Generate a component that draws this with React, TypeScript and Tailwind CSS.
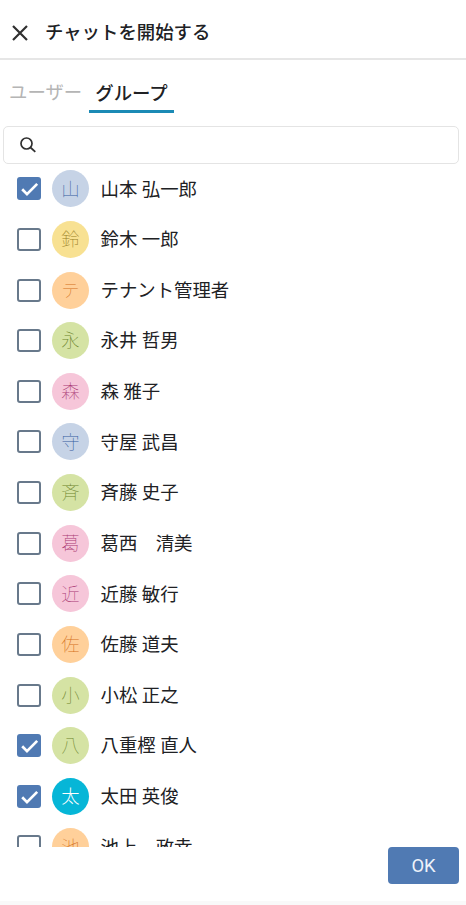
import { useState } from "react";
import clsx from "clsx";

const tones = {
  blue: "bg-[#c6d3e6] text-[#365d9e]",
  yellow: "bg-[#f8e192] text-[#988024]",
  orange: "bg-[#ffd09a] text-[#d5701c]",
  green: "bg-[#d5e3a4] text-[#6d842c]",
  pink: "bg-[#f6c6d9] text-[#ab3b74]",
  cyan: "bg-[#06b6d7] text-white",
};

type Member = {
  name: string;
  tone: keyof typeof tones;
  checked?: boolean;
};

const members: Member[] = [
  { name: "山本 弘一郎", tone: "blue", checked: true },
  { name: "鈴木 一郎", tone: "yellow" },
  { name: "テナント管理者", tone: "orange" },
  { name: "永井 哲男", tone: "green" },
  { name: "森 雅子", tone: "pink" },
  { name: "守屋 武昌", tone: "blue" },
  { name: "斉藤 史子", tone: "green" },
  { name: "葛西　清美", tone: "pink" },
  { name: "近藤 敏行", tone: "pink" },
  { name: "佐藤 道夫", tone: "orange" },
  { name: "小松 正之", tone: "green" },
  { name: "八重樫 直人", tone: "green", checked: true },
  { name: "太田 英俊", tone: "cyan", checked: true },
  { name: "池上　政幸", tone: "orange" },
];

function Checkbox({ checked, label, onChange }: { checked: boolean; label: string; onChange: () => void }) {
  return (
    <button
      role="checkbox"
      aria-checked={checked}
      aria-label={label}
      onClick={onChange}
      className={clsx(
        "flex h-[23px] w-6 shrink-0 items-center justify-center rounded-[3px]",
        checked ? "bg-[#507ab3]" : "border-2 border-[#68798b] bg-white"
      )}
    >
      {checked && (
        <svg viewBox="0 0 23 23" className="size-[23px]" fill="none" stroke="white" strokeWidth="2.7">
          <path d="M4.2 12.3 9 17.1 19.2 6.9" />
        </svg>
      )}
    </button>
  );
}

export default function App() {
  const [selected, setSelected] = useState(members.map((m) => !!m.checked));

  const toggle = (idx: number) => {
    setSelected(selected.map((value, i) => (i === idx ? !value : value)));
  };

  return (
    <div className="flex h-[905px] w-[466px] flex-col overflow-hidden border-b-4 border-[#f9f9f9] bg-white font-[Roboto,'Noto_Sans_CJK_JP',sans-serif] text-[18.4px] text-[#202124]">
      {/* Header */}
      <header className="flex h-[60px] shrink-0 items-center border-b-2 border-[#e6e6e6] pt-[7px] pl-3">
        <button aria-label="閉じる">
          <svg viewBox="0 0 16 16" className="size-4" fill="none" stroke="#303030" strokeWidth="2.2">
            <path d="M1 1 15 15M15 1 1 15" />
          </svg>
        </button>
        <h1 className="ml-[17px] leading-7 font-medium">チャットを開始する</h1>
      </header>

      {/* Tabs */}
      <nav className="flex h-[53px] shrink-0 items-end pl-[9px]">
        <button className="h-9 w-20 pb-1 text-left leading-8 text-[#b5b5b5]">ユーザー</button>
        <button className="h-9 w-[85px] border-b-3 border-[#1b8ab5] leading-8 font-medium">グループ</button>
      </nav>

      {/* Search */}
      <label className="mt-[13px] mr-[7px] ml-[3px] flex h-[37.5px] shrink-0 items-center rounded-[5px] border-[1.5px] border-[#e4e4e4] pl-4">
        <svg viewBox="0 0 16 16" className="size-4 shrink-0" fill="none" stroke="#303030" strokeWidth="1.7">
          <circle cx="6.5" cy="6.5" r="5.5" />
          <path d="m10.5 10.5 4.8 4.4" />
        </svg>
        <input aria-label="検索" className="ml-2 min-w-0 flex-1 outline-none" />
      </label>

      {/* Members */}
      <ul className="h-[683.5px] shrink-0 overflow-hidden">
        {members.map((member, idx) => (
          <li key={member.name} className="flex h-[50.64px] items-center pl-[17px]">
            <Checkbox checked={selected[idx]} label={member.name} onChange={() => toggle(idx)} />
            <span
              className={clsx(
                "ml-[11px] flex size-[37px] shrink-0 items-center justify-center rounded-full pt-0.5 leading-none",
                member.tone === "cyan" ? "font-light" : "font-thin",
                tones[member.tone]
              )}
            >
              {member.name[0]}
            </span>
            <span className="ml-[11.5px] pt-px whitespace-pre">{member.name}</span>
          </li>
        ))}
      </ul>

      {/* Footer */}
      <footer className="flex shrink-0 justify-end pr-[7px]">
        <button className="h-[37px] w-[71px] rounded bg-[#507ab3] text-[#eef3fa]">OK</button>
      </footer>
    </div>
  );
}
